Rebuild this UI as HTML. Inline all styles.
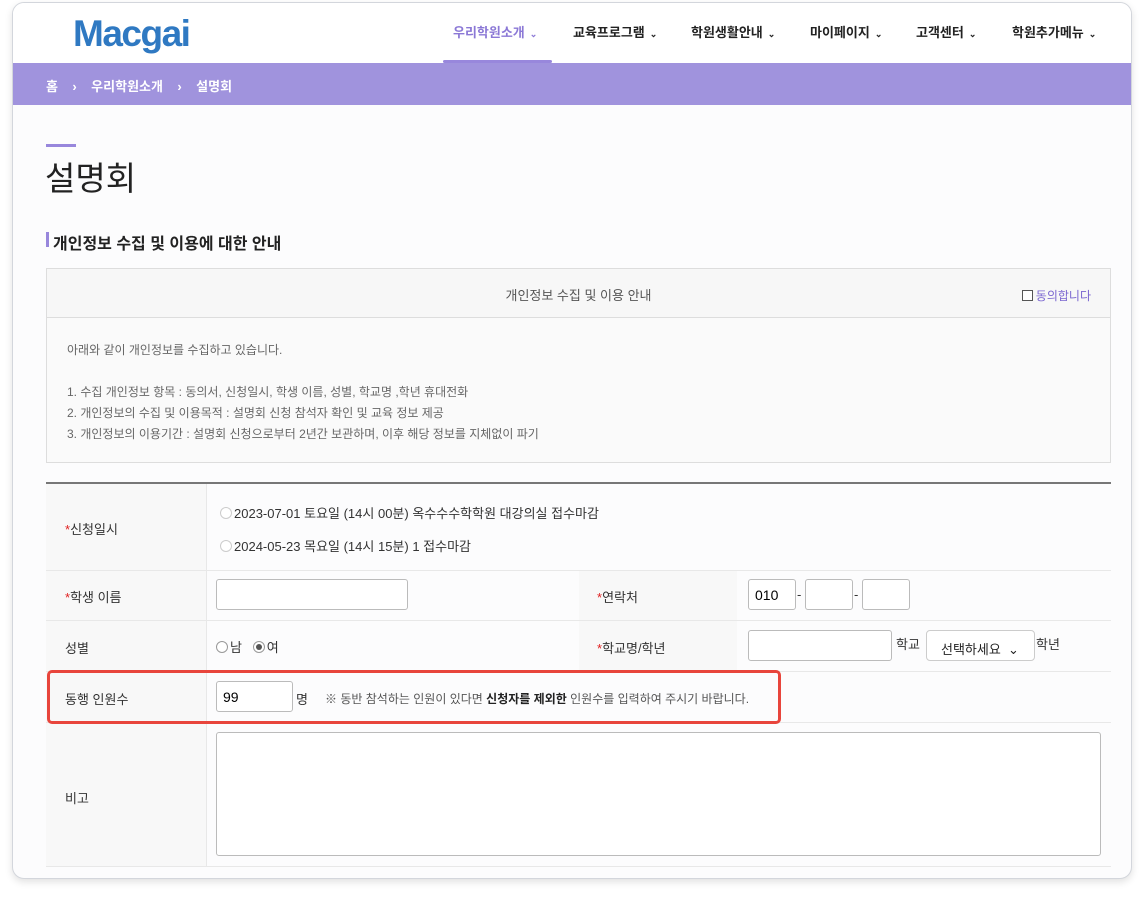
<!DOCTYPE html><html><head><meta charset="utf-8"><style>
*{box-sizing:border-box;margin:0;padding:0}
body{width:1144px;height:901px;background:#fff;font-family:"Liberation Sans","Noto Sans CJK KR",sans-serif;color:#222;position:relative;overflow:hidden}
.card{position:absolute;left:12px;top:2px;width:1120px;height:877px;border:1px solid #d3d6dc;border-radius:12px;background:#fcfcfd;box-shadow:0 3px 8px rgba(0,0,0,.12);overflow:hidden}
.hdr{position:absolute;left:0;top:0;width:100%;height:60px;background:#fff}
.logo{position:absolute;left:60px;top:10px;font-size:37px;font-weight:bold;color:#2f79c2;letter-spacing:-1.5px}
.nav{position:absolute;top:19px;font-size:13px;font-weight:bold;color:#222}
.nav span{font-size:9px;margin-left:5px}
.crumb{position:absolute;left:0;top:60px;width:100%;height:42px;background:#a093dd;color:#fff;font-size:13px;font-weight:bold;padding:13px 0 0 33px}
.abs{position:absolute}
.l{font-size:13px;color:#333}
.r{color:#e02020}
.rd{display:inline-block;width:12px;height:12px;border:1px solid #999;border-radius:50%;vertical-align:-1px;margin-right:2px;background:#fff;position:relative}
.rd.on::after{content:"";position:absolute;left:2px;top:2px;width:6px;height:6px;border-radius:50%;background:#555}
.rd.lt{border-color:#ccc}
input.t{position:absolute;height:31px;border:1px solid #bbb;border-radius:3px;background:#fff;font-size:14px;padding-left:6px}
</style></head><body><div class="card">
<div class="hdr"><div class="logo">Macgai</div>
<div class="nav" style="left:440px;color:#8b78d6">우리학원소개<span>⌄</span></div>
<div class="abs" style="left:430px;top:57px;width:109px;height:3px;background:#9887dc;border-radius:2px"></div>
<div class="nav" style="left:560px">교육프로그램<span>⌄</span></div>
<div class="nav" style="left:678px">학원생활안내<span>⌄</span></div>
<div class="nav" style="left:797px">마이페이지<span>⌄</span></div>
<div class="nav" style="left:903px">고객센터<span>⌄</span></div>
<div class="nav" style="left:999px">학원추가메뉴<span>⌄</span></div>
</div>
<div class="crumb">홈 &nbsp;&nbsp; › &nbsp;&nbsp; 우리학원소개 &nbsp;&nbsp; › &nbsp;&nbsp; 설명회</div>
<div class="abs" style="left:33px;top:141px;width:30px;height:3px;background:#9887dc"></div>
<div class="abs" style="left:32px;top:149px;font-size:33px">설명회</div>
<div class="abs" style="left:33px;top:229px;width:3px;height:15px;background:#9887dc"></div>
<div class="abs" style="left:40px;top:227px;font-size:16px;font-weight:bold">개인정보 수집 및 이용에 대한 안내</div>
<div class="abs" style="left:33px;top:265px;width:1065px;height:195px;border:1px solid #ddd;background:#fafafa">
<div style="height:49px;border-bottom:1px solid #ddd;background:#f7f7f7;text-align:center;padding-top:16px;font-size:13px;color:#555;position:relative">개인정보 수집 및 이용 안내
<span style="position:absolute;right:19px;top:18px;font-size:12px;color:#7a66d0"><span style="display:inline-block;width:11px;height:11px;border:1px solid #555;vertical-align:-1px;margin-right:3px;background:#fff"></span>동의합니다</span></div>
<div style="padding:22px 0 0 20px;font-size:12px;color:#666;line-height:21px">아래와 같이 개인정보를 수집하고 있습니다.<br><br>1. 수집 개인정보 항목 : 동의서, 신청일시, 학생 이름, 성별, 학교명 ,학년 휴대전화<br>2. 개인정보의 수집 및 이용목적 : 설명회 신청 참석자 확인 및 교육 정보 제공<br>3. 개인정보의 이용기간 : 설명회 신청으로부터 2년간 보관하며, 이후 해당 정보를 지체없이 파기</div></div>
<div class="abs" style="left:33px;top:479px;width:1065px;height:2px;background:#777"></div>
<div class="abs" style="left:33px;top:481px;width:160px;height:383px;background:#f8f8f8"></div>
<div class="abs" style="left:566px;top:567px;width:158px;height:101px;background:#f8f8f8"></div>
<div class="abs" style="left:33px;top:567px;width:1065px;height:1px;background:#e8e8e8"></div>
<div class="abs" style="left:33px;top:617px;width:1065px;height:1px;background:#e8e8e8"></div>
<div class="abs" style="left:33px;top:668px;width:1065px;height:1px;background:#e8e8e8"></div>
<div class="abs" style="left:33px;top:719px;width:1065px;height:1px;background:#e8e8e8"></div>
<div class="abs" style="left:33px;top:863px;width:1065px;height:1px;background:#e8e8e8"></div>
<div class="abs" style="left:193px;top:481px;width:1px;height:383px;background:#e8e8e8"></div>
<div class="abs l" style="left:52px;top:516px"><span class="r">*</span>신청일시</div>
<div class="abs l" style="left:207px;top:500px"><span class="rd lt"></span>2023-07-01 토요일 (14시 00분) 옥수수수학학원 대강의실 접수마감</div>
<div class="abs l" style="left:207px;top:533px"><span class="rd lt"></span>2024-05-23 목요일 (14시 15분) 1 접수마감</div>
<div class="abs l" style="left:52px;top:584px"><span class="r">*</span>학생 이름</div>
<input class="t" style="left:203px;top:576px;width:192px">
<div class="abs l" style="left:584px;top:584px"><span class="r">*</span>연락처</div>
<input class="t" style="left:735px;top:576px;width:48px" value="010">
<div class="abs l" style="left:784px;top:584px">-</div>
<input class="t" style="left:792px;top:576px;width:48px">
<div class="abs l" style="left:841px;top:584px">-</div>
<input class="t" style="left:849px;top:576px;width:48px">
<div class="abs l" style="left:52px;top:635px">성별</div>
<div class="abs l" style="left:203px;top:634px"><span class="rd"></span>남 &nbsp; <span class="rd on"></span>여</div>
<div class="abs l" style="left:584px;top:635px"><span class="r">*</span>학교명/학년</div>
<input class="t" style="left:735px;top:627px;width:144px">
<div class="abs l" style="left:883px;top:631px">학교</div>
<div class="abs" style="left:913px;top:627px;width:109px;height:31px;border:1px solid #ccc;border-radius:4px;background:#fff;font-size:13px;padding:8px 0 0 14px">선택하세요 &nbsp;⌄</div>
<div class="abs l" style="left:1023px;top:631px">학년</div>
<div class="abs l" style="left:52px;top:686px">동행 인원수</div>
<input class="t" style="left:203px;top:678px;width:77px" value="99">
<div class="abs l" style="left:283px;top:686px">명</div>
<div class="abs" style="left:312px;top:687px;font-size:12px;color:#555">※ 동반 참석하는 인원이 있다면 <b style="color:#222">신청자를 제외한</b> 인원수를 입력하여 주시기 바랍니다.</div>
<div class="abs" style="left:34px;top:667px;width:734px;height:54px;border:3px solid #e8453c;border-radius:5px"></div>
<div class="abs l" style="left:52px;top:785px">비고</div>
<div class="abs" style="left:203px;top:729px;width:885px;height:124px;border:1px solid #bbb;border-radius:3px;background:#fff"></div>
</div></body></html>
